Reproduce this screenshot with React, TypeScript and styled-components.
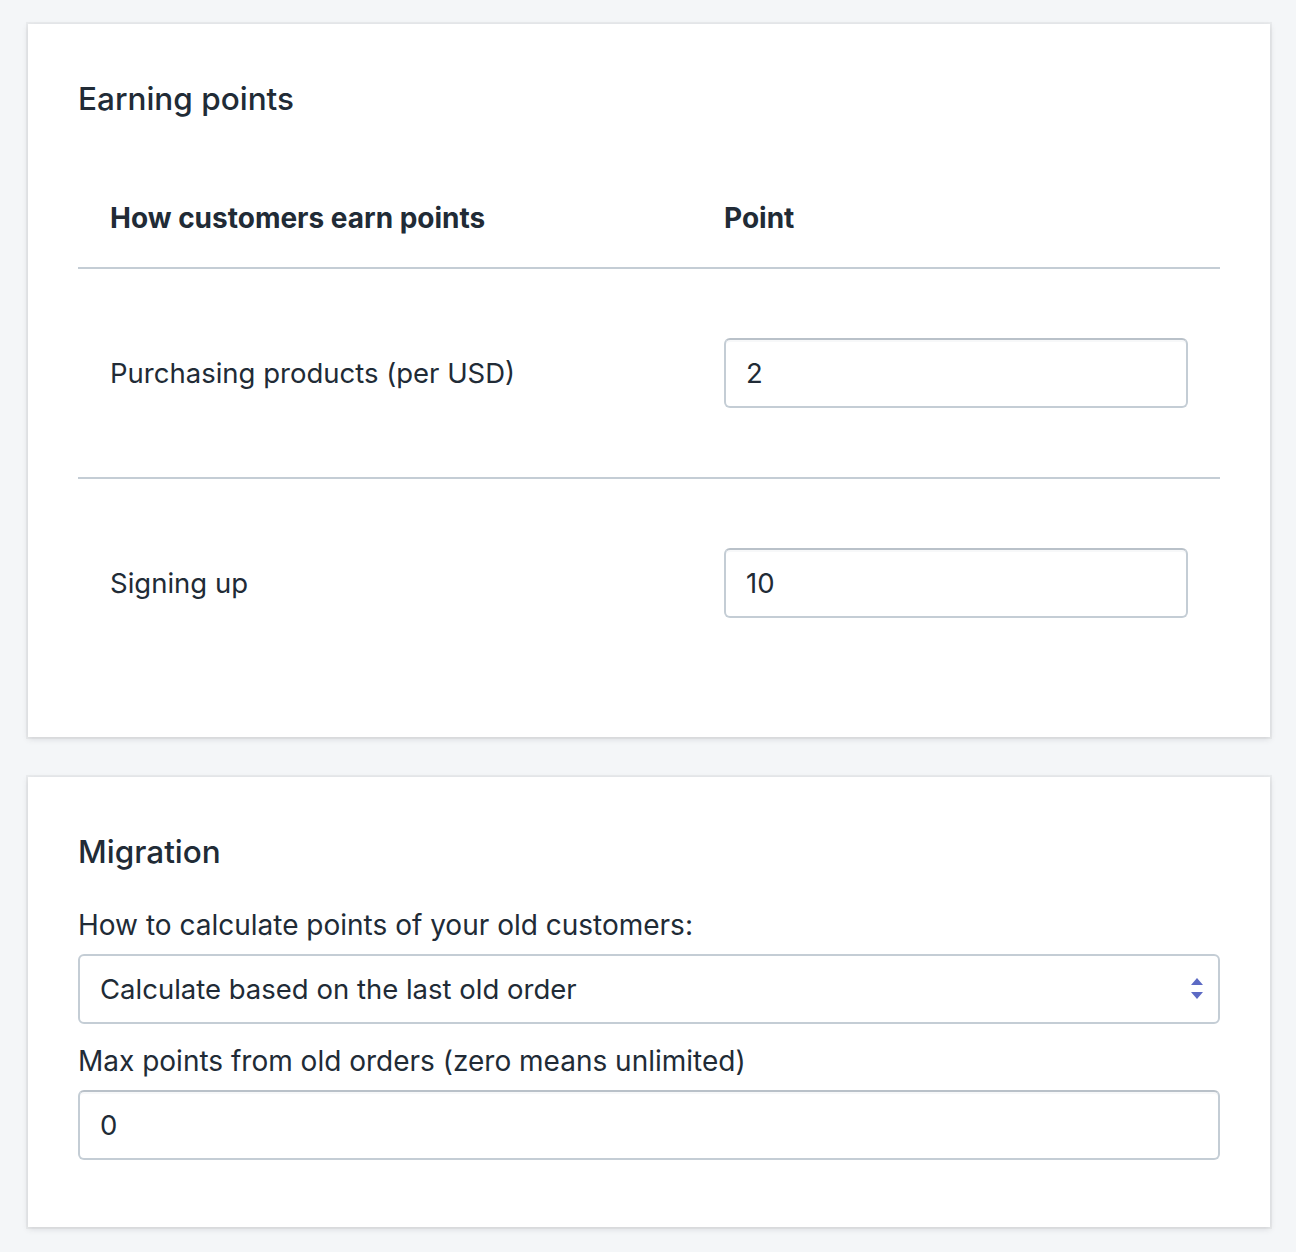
import React from "react";
import styled, { createGlobalStyle } from "styled-components";

const GlobalStyle = createGlobalStyle`
  html, body {
    margin: 0;
    padding: 0;
    background-color: #f4f6f8;
  }
  body {
    font-family: Inter, "Noto Sans", "Liberation Sans", sans-serif;
    color: #212b36;
  }
`;

const Page = styled.div`
  display: flex;
  flex-direction: column;
  gap: 40px;
  padding: 24px 26px 26px 28px;
`;

const Card = styled.section`
  background-color: #ffffff;
  box-shadow: 0 0 0 2px rgba(63, 63, 68, 0.05),
    0 2px 6px 0 rgba(63, 63, 68, 0.15);
  padding: 50px 50px 50px 50px;
`;

const Title = styled.h2`
  margin: 0;
  font-size: 31.5px;
  font-weight: 500;
  line-height: 50px;
`;

const Table = styled.table`
  width: 100%;
  margin-top: 45px;
  border-collapse: collapse;
  table-layout: fixed;
`;

const HeadCell = styled.th<{ $width?: string }>`
  text-align: left;
  font-size: 28px;
  font-weight: 700;
  line-height: 34px;
  padding: 32px;
  border-bottom: 2px solid #c4cdd5;
  width: ${(p) => p.$width ?? "auto"};
`;

const Row = styled.tr`
  & + & > td {
    border-top: 2px solid #c4cdd5;
  }
`;

const Cell = styled.td`
  font-size: 27.5px;
  line-height: 34px;
  padding: 69px 32px;
  vertical-align: middle;
`;

const TextInput = styled.input`
  box-sizing: border-box;
  width: 100%;
  height: 70px;
  padding: 0 20px;
  font-family: inherit;
  font-size: 27.5px;
  color: #212b36;
  background: #ffffff;
  border: 2px solid #c4cdd5;
  border-top-color: #b9c1c9;
  border-radius: 6px;
  box-shadow: inset 0 2px 0 0 rgba(99, 115, 129, 0.05);
  outline: none;
`;

const Field = styled.div<{ $top?: number }>`
  display: flex;
  flex-direction: column;
  gap: 9px;
  margin-top: ${(p) => p.$top ?? 17}px;
`;

const Label = styled.label`
  font-size: 28px;
  line-height: 40px;
`;

const SelectBox = styled.div`
  position: relative;
  display: flex;
  align-items: center;
  box-sizing: border-box;
  height: 70px;
  padding: 0 20px;
  font-size: 27.5px;
  border: 2px solid #c4cdd5;
  border-radius: 6px;
  background: #ffffff;
`;

const Arrows = styled.svg`
  position: absolute;
  right: 14px;
  top: 50%;
  transform: translateY(-50%);
`;

const BottomSpace = styled.div`
  height: 17px;
`;

const earning = [
  { label: "Purchasing products (per USD)", value: "2" },
  { label: "Signing up", value: "10" },
];

export default function App() {
  return (
    <>
      <GlobalStyle />
      <Page>
        <Card>
          <Title>Earning points</Title>
          <Table>
            <thead>
              <tr>
                <HeadCell $width="550px">How customers earn points</HeadCell>
                <HeadCell>Point</HeadCell>
              </tr>
            </thead>
            <tbody>
              {earning.map((item) => (
                <Row key={item.label}>
                  <Cell>{item.label}</Cell>
                  <Cell>
                    <TextInput defaultValue={item.value} />
                  </Cell>
                </Row>
              ))}
            </tbody>
          </Table>
        </Card>
        <Card>
          <Title>Migration</Title>
          <Field $top={28}>
            <Label>How to calculate points of your old customers:</Label>
            <SelectBox>
              Calculate based on the last old order
              <Arrows width="14" height="22" viewBox="0 0 14 22">
                <path d="M7 0 L13 7 L1 7 Z" fill="#5c6ac4" />
                <path d="M1 14 L13 14 L7 21 Z" fill="#5c6ac4" />
              </Arrows>
            </SelectBox>
          </Field>
          <Field>
            <Label>Max points from old orders (zero means unlimited)</Label>
            <TextInput defaultValue="0" />
          </Field>
          <BottomSpace />
        </Card>
      </Page>
    </>
  );
}
